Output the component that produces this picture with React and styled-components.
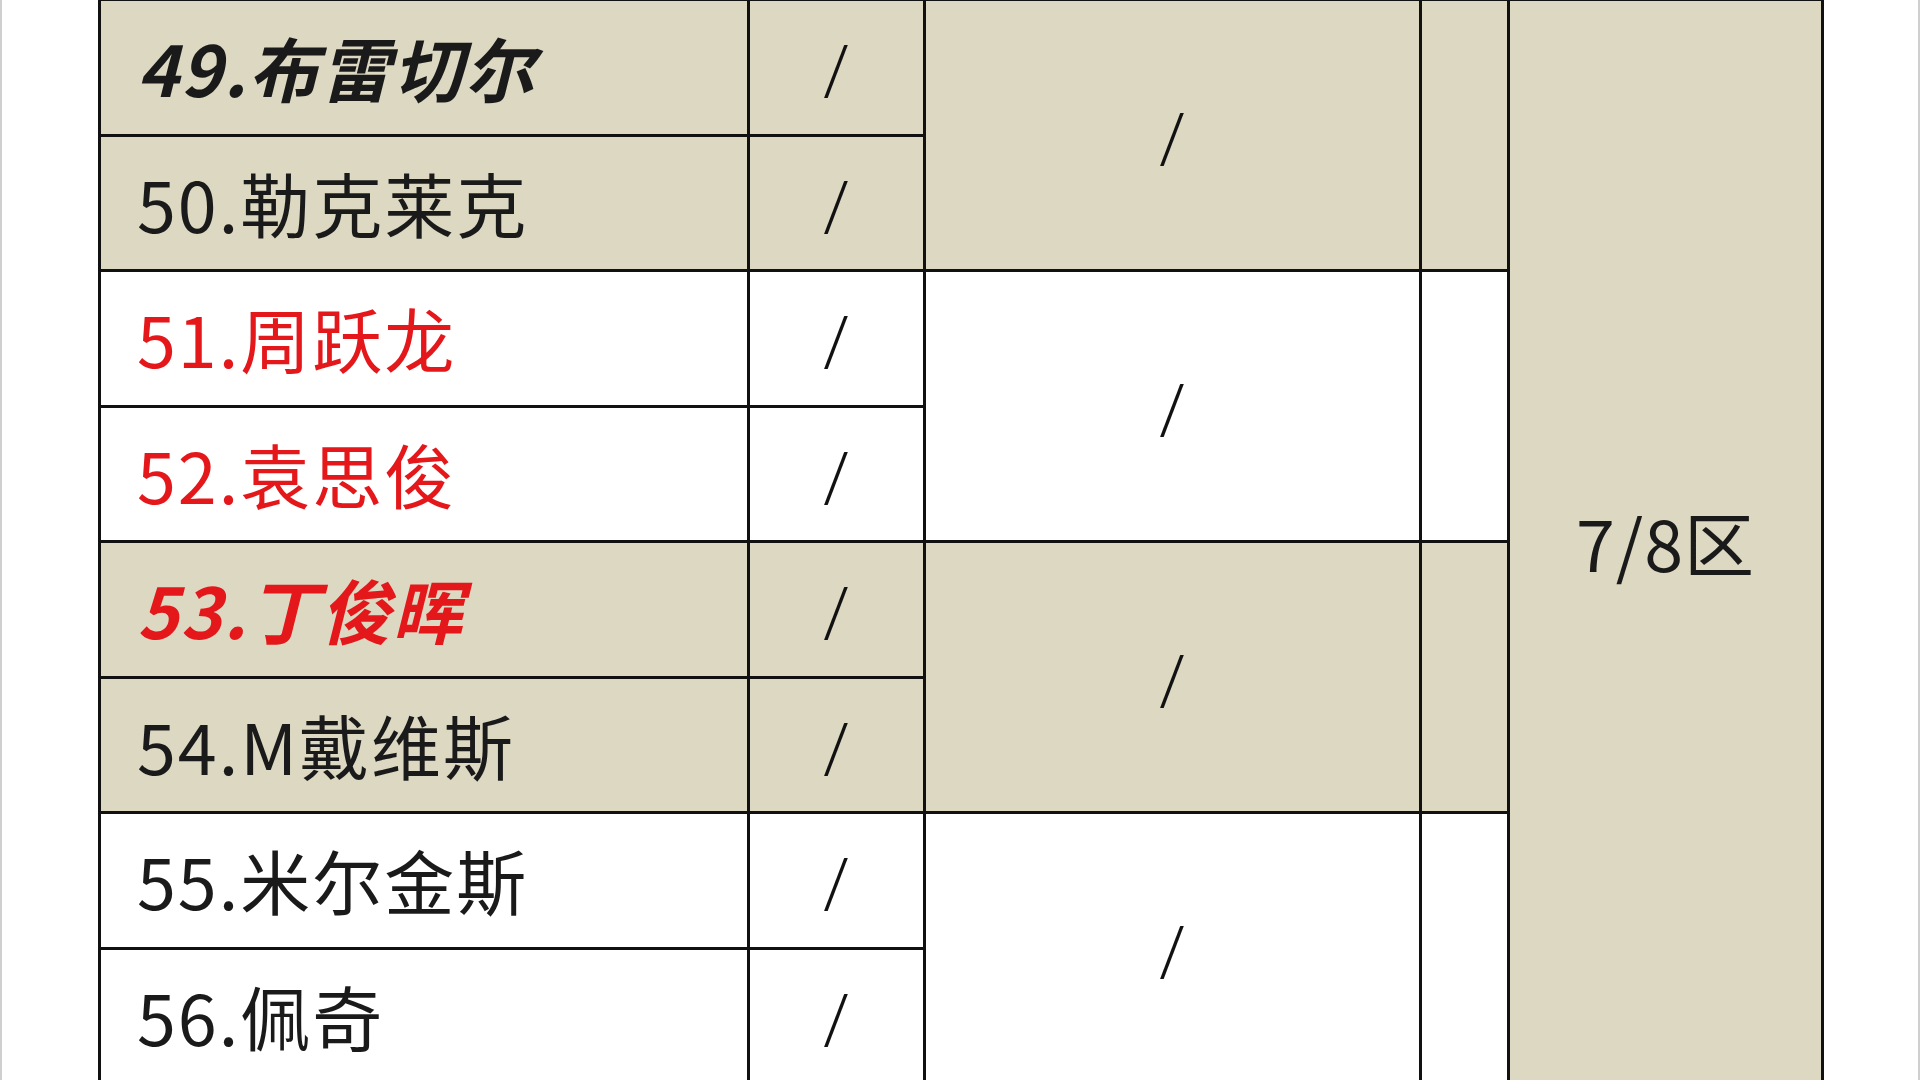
import React from 'react'
import styled, { createGlobalStyle } from 'styled-components';

const GlobalStyle = createGlobalStyle`
  html, body {
    margin: 0;
    padding: 0;
    background: #ffffff;
    overflow: hidden;
  }
  body {
    font-family: "Noto Sans CJK SC", "Noto Sans", sans-serif;
  }
`;

const BEIGE = '#dcd8c2';
const RED = '#e4171b';

const columns = [649, 176, 496, 88, 314];

const players = [
    { name: '49.布雷切尔', strong: true },
    { name: '50.勒克莱克' },
    { name: '51.周跃龙', red: true },
    { name: '52.袁思俊', red: true },
    { name: '53.丁俊晖', red: true, strong: true },
    { name: '54.M戴维斯' },
    { name: '55.米尔金斯' },
    { name: '56.佩奇' },
];

function App() {
    return (
        <>
            <GlobalStyle />
            <Page>
                <Table>
                    <colgroup>
                        {columns.map((w, i) => <Col key={i} $w={w} />)}
                    </colgroup>
                    <tbody>
                        {players.map((p, i) => {
                            const shaded = Math.floor(i / 2) % 2 === 0;
                            return (
                                <tr key={p.name}>
                                    <NameCell $shaded={shaded} $red={p.red} $strong={p.strong}>
                                        {p.name}
                                    </NameCell>
                                    <Cell $shaded={shaded}><Slash>/</Slash></Cell>
                                    {i % 2 === 0 && (
                                        <>
                                            <Cell $shaded={shaded} rowSpan={2}><Slash>/</Slash></Cell>
                                            <Cell $shaded={shaded} rowSpan={2}></Cell>
                                        </>
                                    )}
                                    {i === 0 && (
                                        <ZoneCell rowSpan={8}>7/8区</ZoneCell>
                                    )}
                                </tr>
                            )
                        })}
                    </tbody>
                </Table>
            </Page>
        </>
    )
}

export default App

const Page = styled.div`
  width: 1920px;
  height: 1080px;
  box-sizing: border-box;
  border-left: 2px solid #cfcfcf;
  border-right: 2px solid #cfcfcf;
  padding-left: 96px;
  overflow: hidden;
`;

const Table = styled.table`
  border-collapse: collapse;
  table-layout: fixed;
  width: 1723px;
  margin-top: -2px;

  tr {
    height: 135.5px;
  }
`;

const Col = styled.col`
  width: ${({ $w }) => $w}px;
`;

const Cell = styled.td`
  border: 3px solid #111;
  background: ${({ $shaded }) => ($shaded ? BEIGE : '#ffffff')};
  text-align: center;
  vertical-align: middle;
  font-size: 70px;
  color: #111;
  padding: 0;
  line-height: 1;
`;

const Slash = styled.span`
  font-family: "Roboto", "Liberation Sans", sans-serif;
  font-weight: 300;
  font-size: 68px;
  color: #111;
`;

const NameCell = styled(Cell)`
  text-align: left;
  padding-left: 36px;
  color: ${({ $red }) => ($red ? RED : '#1a1a1a')};
  font-weight: ${({ $strong }) => ($strong ? 700 : 400)};
  font-style: ${({ $strong }) => ($strong ? 'italic' : 'normal')};
  letter-spacing: 2px;
  white-space: nowrap;
`;

const ZoneCell = styled(Cell)`
  background: ${BEIGE};
  color: #1a1a1a;
  letter-spacing: 1px;
`;
